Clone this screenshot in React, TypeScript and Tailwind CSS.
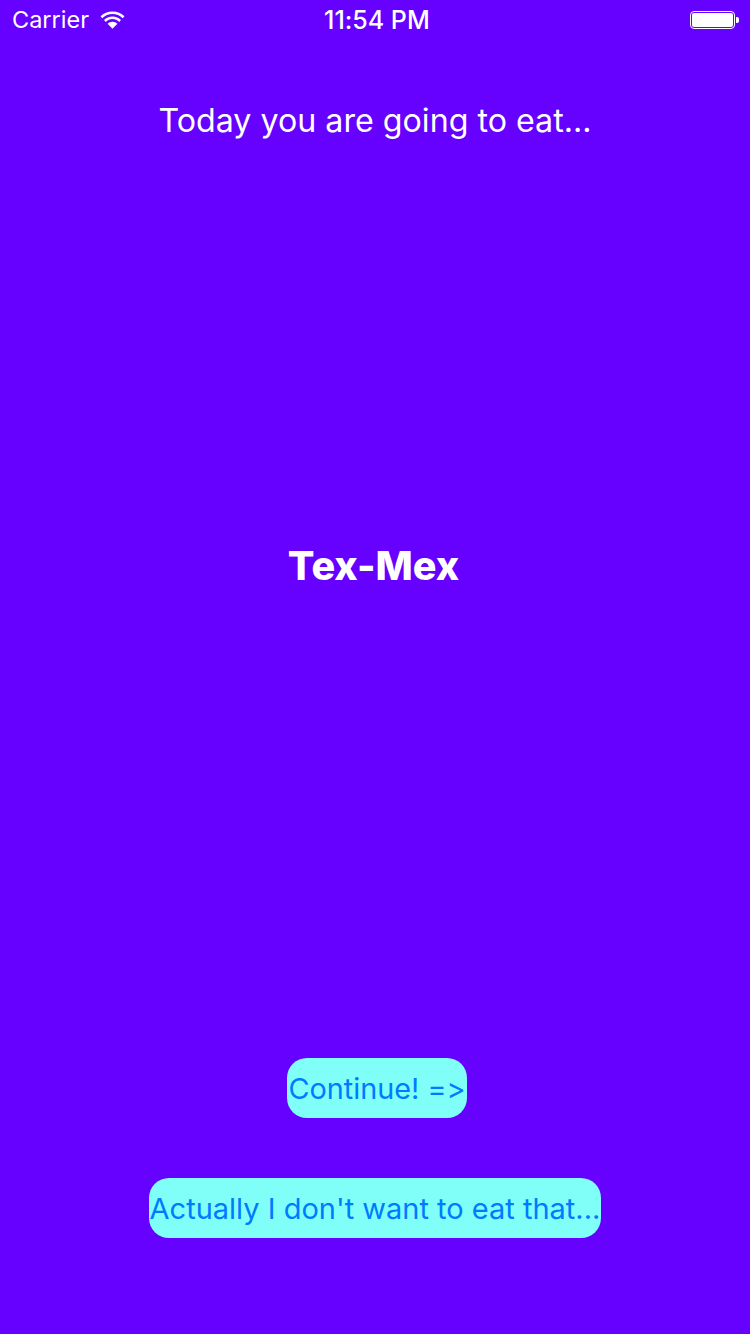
export default function App() {
  return (
    <div className="w-[750px] h-[1334px] bg-[#6600ff] flex flex-col items-center text-white font-['Inter','Roboto',sans-serif] [font-feature-settings:'calt'_0] overflow-hidden">
      <div className="w-full h-[40px] pl-[12px] pr-[11px] flex items-center justify-between relative text-[23.5px] leading-[40px]">
        <div className="flex items-center gap-[11px]">
          <span className="font-normal">Carrier</span>
          <svg width="25" height="18" viewBox="0 0 25 18" fill="#fff">
            <path d="M12.5 0.5C7.8 0.5 3.6 2.3 0.5 5.3L2.3 7.2C4.9 4.6 8.5 3 12.5 3C16.5 3 20.1 4.6 22.7 7.2L24.5 5.3C21.4 2.3 17.2 0.5 12.5 0.5Z" />
            <path d="M12.5 5.6C9.2 5.6 6.2 6.9 4 9L5.8 10.9C7.5 9.2 9.9 8.1 12.5 8.1C15.1 8.1 17.5 9.2 19.2 10.9L21 9C18.8 6.9 15.8 5.6 12.5 5.6Z" />
            <path d="M12.5 10.7C10.6 10.7 8.9 11.4 7.6 12.7L12.5 17.8L17.4 12.7C16.1 11.4 14.4 10.7 12.5 10.7Z" />
          </svg>
        </div>
        <span className="font-medium text-[25px] absolute left-[324px] top-0">11:54 PM</span>
        <div className="flex items-center">
          <div className="w-[45px] h-[18px] border border-white rounded-[4px] p-[1px]">
            <div className="w-full h-full bg-white rounded-[2px]" />
          </div>
          <div className="w-[3px] h-[6px] bg-white rounded-r-[2px] ml-[1px]" />
        </div>
      </div>
      <div className="mt-[60px] h-[40px] text-[32.2px] leading-[41px]">Today you are going to eat...</div>
      <div className="mt-[406px] h-[40px] text-[39.5px] leading-[40px] font-extrabold -ml-[3px]">Tex-Mex</div>
      <button className="mt-[472px] ml-[4px] w-[180px] h-[60px] pt-[2px] bg-[#7ffff8] rounded-[20px] text-[#007aff] text-[28.8px] flex items-center justify-center whitespace-nowrap">Continue! =&gt;</button>
      <button className="mt-[60px] w-[452px] h-[60px] pt-[2px] bg-[#7ffff8] rounded-[20px] text-[#007aff] text-[29px] flex items-center justify-center whitespace-nowrap">Actually I don't want to eat that...</button>
    </div>
  );
}
